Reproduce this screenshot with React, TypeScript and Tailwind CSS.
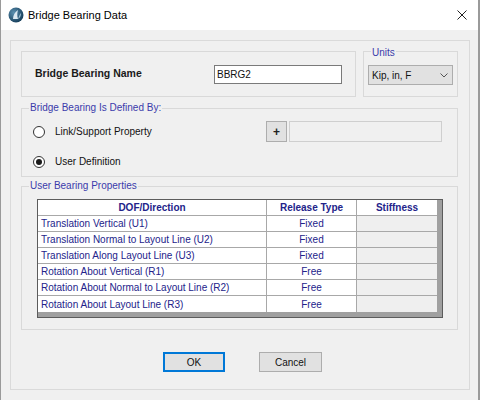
import { ReactNode } from "react";

const rows = [
  ["Translation Vertical (U1)", "Fixed"],
  ["Translation Normal to Layout Line (U2)", "Fixed"],
  ["Translation Along Layout Line (U3)", "Fixed"],
  ["Rotation About Vertical (R1)", "Free"],
  ["Rotation About Normal to Layout Line (R2)", "Free"],
  ["Rotation About Layout Line (R3)", "Free"],
];

// etched windows-style group box with a caption over the top edge
const GroupBox = ({
  label,
  labelTop = "-top-[7px]",
  className,
  children,
}: {
  label?: string;
  labelTop?: string;
  className?: string;
  children: ReactNode;
}) => (
  <div className={`relative border border-[#d9d9d9] ${className}`}>
    {label && (
      <span
        className={`absolute ${labelTop} left-[7px] bg-[#f0f0f0] px-[1px] text-[10px] leading-[12px] text-[#3b3bab]`}
      >
        {label}
      </span>
    )}
    {children}
  </div>
);

const Radio = ({ checked }: { checked?: boolean }) => (
  <div className="flex h-[12px] w-[12px] items-center justify-center rounded-full border border-[#333] bg-white">
    {checked && <div className="h-[6px] w-[6px] rounded-full bg-[#1a1a1a]" />}
  </div>
);

const App = () => {
  return (
    <div
      className="flex h-[400px] w-[480px] flex-col border-l border-r-2 border-[#9a9a9a] bg-[#f0f0f0] text-[10px] text-[#111]"
      style={{ fontFamily: '"Liberation Sans", Arial, sans-serif' }}
    >
      {/* title bar */}
      <div className="flex h-[30px] items-center bg-white pl-[7px] pr-[11px]">
        <svg width="16" height="16" viewBox="0 0 16 16">
          <defs>
            <radialGradient id="g" cx="35%" cy="35%" r="70%">
              <stop offset="0%" stopColor="#5b8fb0" />
              <stop offset="100%" stopColor="#163e5a" />
            </radialGradient>
          </defs>
          <circle cx="8" cy="8" r="7.5" fill="url(#g)" />
          <path d="M5 12 C5 8 7 5 10 3 C9 6 9 9 10 12 Z" fill="#dbe8f2" />
          <path d="M10 12 C11 9 12 7 13 6 C13 9 12 11 10 12 Z" fill="#9fc0d6" />
        </svg>
        <span className="ml-[4px] text-[11px] text-black">Bridge Bearing Data</span>
        <svg className="ml-auto" width="10" height="10" viewBox="0 0 10 10">
          <path d="M0.5 0.5 L9.5 9.5 M9.5 0.5 L0.5 9.5" stroke="#222" strokeWidth="1" />
        </svg>
      </div>

      {/* body */}
      <div className="flex-1 px-[9px] pt-[10px]">
        <div className="flex h-[350px] w-[460px] flex-col border border-[#dadada] px-[10px] pt-[10px]">
          {/* name + units */}
          <div className="flex gap-[7px]">
            <GroupBox className="flex h-[46px] w-[335px] items-center justify-between px-[13px]">
              <span className="text-[10.5px] font-bold text-[#1a1a1a]">Bridge Bearing Name</span>
              <div className="flex h-[19px] w-[128px] items-center border border-[#7a7a7a] bg-white pl-[2px]">
                BBRG2
              </div>
            </GroupBox>
            <GroupBox label="Units" labelTop="-top-[5px]" className="h-[46px] w-[95px] px-[4px] pt-[13px]">
              <div className="flex h-[20px] w-[85px] items-center justify-between border border-[#adadad] bg-[#e1e1e1] pl-[3px] pr-[4px]">
                <span>Kip, in, F</span>
                <svg width="8" height="5" viewBox="0 0 8 5">
                  <path d="M0.5 0.5 L4 4 L7.5 0.5" stroke="#555" fill="none" strokeWidth="1" />
                </svg>
              </div>
            </GroupBox>
          </div>

          {/* defined by */}
          <GroupBox
            label="Bridge Bearing Is Defined By:"
            className="mt-[11px] flex h-[69px] w-[437px] flex-col gap-[9px] pl-[11px] pr-[15px] pt-[12px]"
          >
            <div className="flex h-[21px] items-center">
              <Radio />
              <span className="ml-[10px]">Link/Support Property</span>
              <div className="ml-auto flex h-[21px] w-[21px] items-center justify-center border border-[#adadad] bg-[#e1e1e1] text-[12px] font-bold leading-none text-[#222]">
                +
              </div>
              <div className="ml-[2px] h-[21px] w-[153px] border border-[#cfcfcf] bg-[#f0f0f0]" />
            </div>
            <div className="flex h-[21px] items-center">
              <Radio checked />
              <span className="ml-[10px]">User Definition</span>
            </div>
          </GroupBox>

          {/* user bearing properties */}
          <GroupBox
            label="User Bearing Properties"
            className="mt-[9px] h-[144px] w-[437px] pl-[15px] pt-[12px]"
          >
            <div className="w-[406px] border border-[#5c5c5c] bg-[#a0a0a0] pb-[5px] pr-[5px] text-[#23238a]">
              <div className="flex h-[16px] border-b border-[#a8a8a8] bg-white font-bold">
                <div className="flex w-[229px] items-center justify-center border-r border-[#a8a8a8]">
                  DOF/Direction
                </div>
                <div className="flex w-[90px] items-center justify-center border-r border-[#a8a8a8]">
                  Release Type
                </div>
                <div className="flex w-[80px] items-center justify-center">Stiffness</div>
              </div>
              {rows.map(([dof, type], i) => (
                <div
                  key={dof}
                  className={`flex h-[16px] ${i < rows.length - 1 ? "border-b border-[#a8a8a8]" : ""}`}
                >
                  <div className="flex w-[229px] items-center border-r border-[#a8a8a8] bg-white pl-[3px]">
                    {dof}
                  </div>
                  <div className="flex w-[90px] items-center justify-center border-r border-[#a8a8a8] bg-white">
                    {type}
                  </div>
                  <div className="w-[80px] bg-[#efefef]" />
                </div>
              ))}
            </div>
          </GroupBox>

          {/* buttons */}
          <div className="flex gap-[34px] pl-[142px] pt-[22px]">
            <div className="flex h-[20px] w-[62px] items-center justify-center border border-[#0078d7] bg-[#e1e1e1] shadow-[inset_0_0_0_1px_#0078d7]">
              OK
            </div>
            <div className="flex h-[20px] w-[63px] items-center justify-center border border-[#adadad] bg-[#e1e1e1]">
              Cancel
            </div>
          </div>
        </div>
      </div>
    </div>
  );
};

export default App;
